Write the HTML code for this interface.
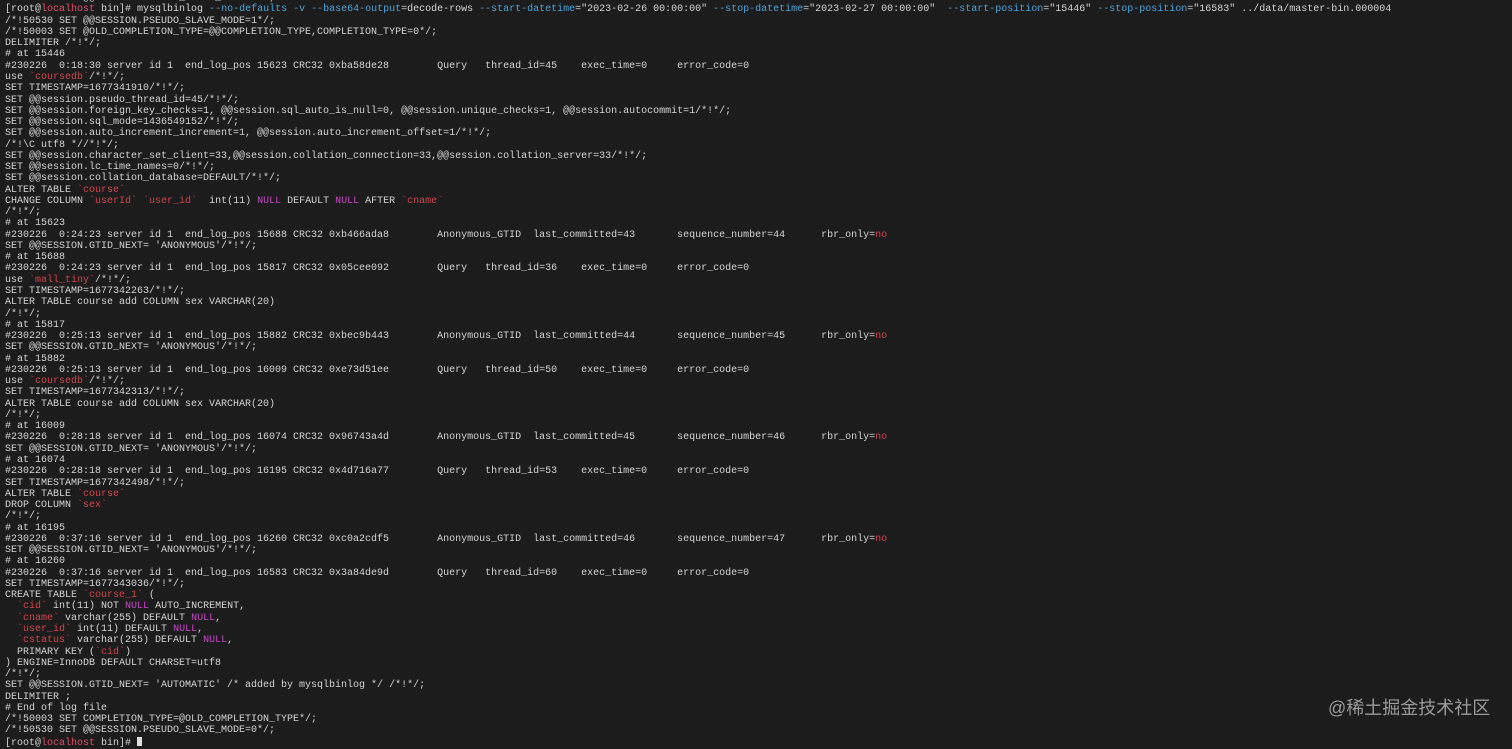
<!DOCTYPE html>
<html><head><meta charset="utf-8"><style>
html,body{margin:0;padding:0;background:#1c1c1c;width:1512px;height:741px;overflow:hidden;}
pre{position:absolute;left:5px;top:-6.9px;margin:0;font-family:"Liberation Mono",monospace;font-size:10px;line-height:11.27px;color:#d4d4d4;tab-size:8;-moz-tab-size:8;white-space:pre;}
.h{color:#e0506a}.b{color:#4fa3d8}.r{color:#d0444c}.n{color:#c847c8}
.wm{position:absolute;left:1328px;top:694px;font-family:"Liberation Sans","Noto Sans CJK SC",sans-serif;font-size:18px;color:#9a9a9a;}
.cur{display:inline-block;width:5px;height:9px;background:#e0e0e0;vertical-align:-1px}
</style></head><body>
<pre>/*!50530 SET @@SESSION.PSEUDO_SLAVE_MODE=1*/;
[root@<span class="h">localhost</span> bin]# mysqlbinlog <span class="b">--no-defaults -v --base64-output</span>=decode-rows <span class="b">--start-datetime</span>="2023-02-26 00:00:00" <span class="b">--stop-datetime</span>="2023-02-27 00:00:00"  <span class="b">--start-position</span>="15446" <span class="b">--stop-position</span>="16583" ../data/master-bin.000004
/*!50530 SET @@SESSION.PSEUDO_SLAVE_MODE=1*/;
/*!50003 SET @OLD_COMPLETION_TYPE=@@COMPLETION_TYPE,COMPLETION_TYPE=0*/;
DELIMITER /*!*/;
# at 15446
#230226  0:18:30 server id 1  end_log_pos 15623 CRC32 0xba58de28	Query	thread_id=45	exec_time=0	error_code=0
use <span class="r">`coursedb`</span>/*!*/;
SET TIMESTAMP=1677341910/*!*/;
SET @@session.pseudo_thread_id=45/*!*/;
SET @@session.foreign_key_checks=1, @@session.sql_auto_is_null=0, @@session.unique_checks=1, @@session.autocommit=1/*!*/;
SET @@session.sql_mode=1436549152/*!*/;
SET @@session.auto_increment_increment=1, @@session.auto_increment_offset=1/*!*/;
/*!\C utf8 *//*!*/;
SET @@session.character_set_client=33,@@session.collation_connection=33,@@session.collation_server=33/*!*/;
SET @@session.lc_time_names=0/*!*/;
SET @@session.collation_database=DEFAULT/*!*/;
ALTER TABLE <span class="r">`course`</span>
CHANGE COLUMN <span class="r">`userId`</span> <span class="r">`user_id`</span>  int(11) <span class="n">NULL</span> DEFAULT <span class="n">NULL</span> AFTER <span class="r">`cname`</span>
/*!*/;
# at 15623
#230226  0:24:23 server id 1  end_log_pos 15688 CRC32 0xb466ada8	Anonymous_GTID	last_committed=43	sequence_number=44	rbr_only=<span class="r">no</span>
SET @@SESSION.GTID_NEXT= 'ANONYMOUS'/*!*/;
# at 15688
#230226  0:24:23 server id 1  end_log_pos 15817 CRC32 0x05cee092	Query	thread_id=36	exec_time=0	error_code=0
use <span class="r">`mall_tiny`</span>/*!*/;
SET TIMESTAMP=1677342263/*!*/;
ALTER TABLE course add COLUMN sex VARCHAR(20)
/*!*/;
# at 15817
#230226  0:25:13 server id 1  end_log_pos 15882 CRC32 0xbec9b443	Anonymous_GTID	last_committed=44	sequence_number=45	rbr_only=<span class="r">no</span>
SET @@SESSION.GTID_NEXT= 'ANONYMOUS'/*!*/;
# at 15882
#230226  0:25:13 server id 1  end_log_pos 16009 CRC32 0xe73d51ee	Query	thread_id=50	exec_time=0	error_code=0
use <span class="r">`coursedb`</span>/*!*/;
SET TIMESTAMP=1677342313/*!*/;
ALTER TABLE course add COLUMN sex VARCHAR(20)
/*!*/;
# at 16009
#230226  0:28:18 server id 1  end_log_pos 16074 CRC32 0x96743a4d	Anonymous_GTID	last_committed=45	sequence_number=46	rbr_only=<span class="r">no</span>
SET @@SESSION.GTID_NEXT= 'ANONYMOUS'/*!*/;
# at 16074
#230226  0:28:18 server id 1  end_log_pos 16195 CRC32 0x4d716a77	Query	thread_id=53	exec_time=0	error_code=0
SET TIMESTAMP=1677342498/*!*/;
ALTER TABLE <span class="r">`course`</span>
DROP COLUMN <span class="r">`sex`</span>
/*!*/;
# at 16195
#230226  0:37:16 server id 1  end_log_pos 16260 CRC32 0xc0a2cdf5	Anonymous_GTID	last_committed=46	sequence_number=47	rbr_only=<span class="r">no</span>
SET @@SESSION.GTID_NEXT= 'ANONYMOUS'/*!*/;
# at 16260
#230226  0:37:16 server id 1  end_log_pos 16583 CRC32 0x3a84de9d	Query	thread_id=60	exec_time=0	error_code=0
SET TIMESTAMP=1677343036/*!*/;
CREATE TABLE <span class="r">`course_1`</span> (
  <span class="r">`cid`</span> int(11) NOT <span class="n">NULL</span> AUTO_INCREMENT,
  <span class="r">`cname`</span> varchar(255) DEFAULT <span class="n">NULL</span>,
  <span class="r">`user_id`</span> int(11) DEFAULT <span class="n">NULL</span>,
  <span class="r">`cstatus`</span> varchar(255) DEFAULT <span class="n">NULL</span>,
  PRIMARY KEY (<span class="r">`cid`</span>)
) ENGINE=InnoDB DEFAULT CHARSET=utf8
/*!*/;
SET @@SESSION.GTID_NEXT= 'AUTOMATIC' /* added by mysqlbinlog */ /*!*/;
DELIMITER ;
# End of log file
/*!50003 SET COMPLETION_TYPE=@OLD_COMPLETION_TYPE*/;
/*!50530 SET @@SESSION.PSEUDO_SLAVE_MODE=0*/;
[root@<span class="h">localhost</span> bin]# <span class="cur"></span></pre>
<div class="wm">@稀土掘金技术社区</div>
</body></html>
